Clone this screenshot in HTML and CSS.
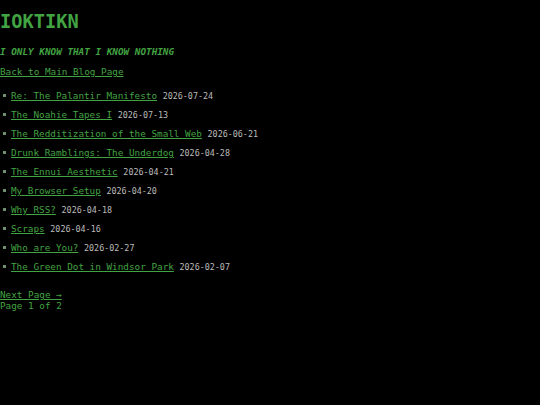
FILE: index.html
```html
<!DOCTYPE html>
<html>
<head>
<meta charset="utf-8">
<link rel="stylesheet" href="styles.css">
</head>
<body>
<h1 class="title">IOKTIKN</h1>
<p class="subtitle">I ONLY KNOW THAT I KNOW NOTHING</p>
<p class="back"><a href="#">Back to Main Blog Page</a></p>
<ul class="posts">
<li><a href="#">Re: The Palantir Manifesto</a> <span class="date">2026-07-24</span></li>
<li><a href="#">The Noahie Tapes I</a> <span class="date">2026-07-13</span></li>
<li><a href="#">The Redditization of the Small Web</a> <span class="date">2026-06-21</span></li>
<li><a href="#">Drunk Ramblings: The Underdog</a> <span class="date">2026-04-28</span></li>
<li><a href="#">The Ennui Aesthetic</a> <span class="date">2026-04-21</span></li>
<li><a href="#">My Browser Setup</a> <span class="date">2026-04-20</span></li>
<li><a href="#">Why RSS?</a> <span class="date">2026-04-18</span></li>
<li><a href="#">Scraps</a> <span class="date">2026-04-16</span></li>
<li><a href="#">Who are You?</a> <span class="date">2026-02-27</span></li>
<li><a href="#">The Green Dot in Windsor Park</a> <span class="date">2026-02-07</span></li>
</ul>
<div class="pager">
<a href="#">Next Page →</a>
<div>Page 1 of 2</div>
</div>
</body>
</html>
```
FILE: styles.css
```css
html, body {
  background: #000;
}
body {
  margin: 0;
  padding: 0;
  font-family: "DejaVu Sans Mono", monospace;
  font-size: 9.33px;
  line-height: 11px;
  color: #42a342;
}
a {
  color: #42a342;
  text-decoration: underline;
}
.title {
  font-size: 18.67px;
  line-height: 22px;
  margin: 11px 0 0 0;
  font-weight: bold;
}
.subtitle {
  margin: 13px 0 0 0;
  font-weight: bold;
  font-style: italic;
}
.back {
  margin: 9px 0 0 0;
}
.posts {
  list-style: none;
  margin: 9px 0 0 0;
  padding: 0 0 0 11px;
}
.posts li {
  line-height: 19px;
  height: 19px;
}
.posts li::before {
  content: "";
  display: inline-block;
  width: 3px;
  height: 3px;
  margin-left: -8px;
  margin-right: 5px;
  vertical-align: 2px;
  background: #6f8f6f;
}
.date {
  color: #bbbbbb;
  font-size: 8.4px;
  line-height: 11px;
}
.pager {
  margin-top: 13px;
}
```
